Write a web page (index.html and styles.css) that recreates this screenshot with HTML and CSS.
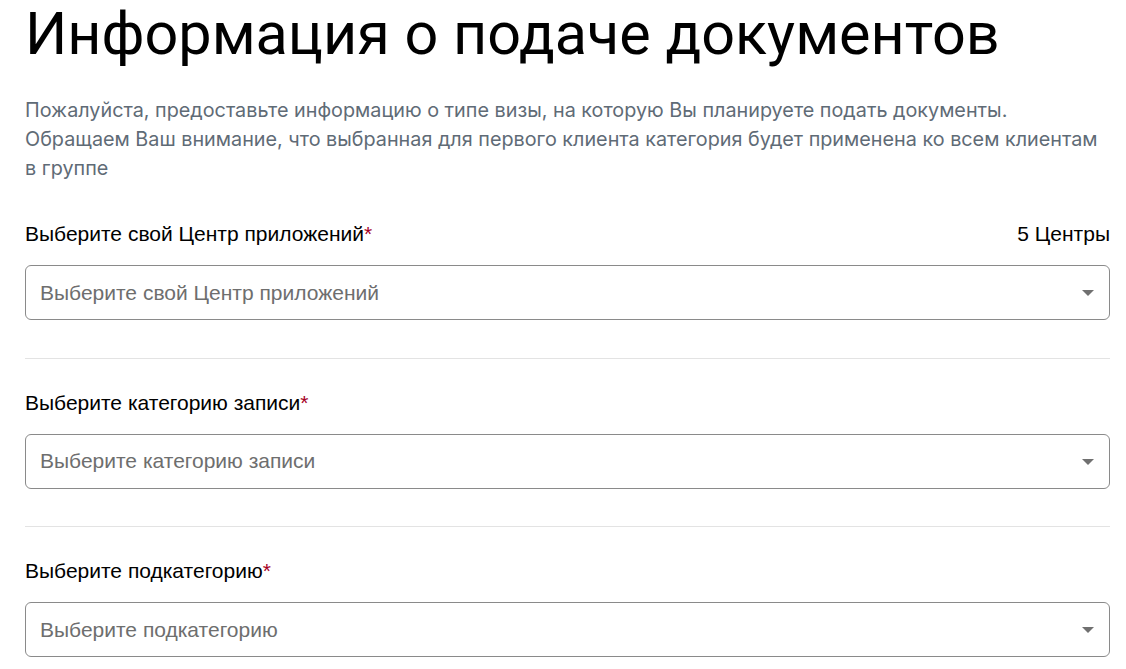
FILE: index.html
```html
<!DOCTYPE html>
<html lang="ru">
<head>
<meta charset="utf-8">
<link rel="stylesheet" href="styles.css">
</head>
<body>
<main class="page">
  <h1 class="title">Информация о подаче документов</h1>
  <p class="intro">Пожалуйста, предоставьте информацию о типе визы, на которую Вы планируете подать документы. Обращаем Ваш внимание, что выбранная для первого клиента категория будет применена ко всем клиентам в группе</p>

  <section class="field">
    <div class="label-row">
      <span class="label">Выберите свой Центр приложений<span class="req">*</span></span>
      <span class="count">5 Центры</span>
    </div>
    <div class="select">
      <span class="placeholder">Выберите свой Центр приложений</span>
      <svg class="caret" width="12" height="6" viewBox="0 0 12 6"><path d="M0 0H12L6 6Z" fill="#707070"/></svg>
    </div>
  </section>
  <hr class="divider">

  <section class="field">
    <div class="label-row">
      <span class="label">Выберите категорию записи<span class="req">*</span></span>
    </div>
    <div class="select">
      <span class="placeholder">Выберите категорию записи</span>
      <svg class="caret" width="12" height="6" viewBox="0 0 12 6"><path d="M0 0H12L6 6Z" fill="#707070"/></svg>
    </div>
  </section>
  <hr class="divider">

  <section class="field">
    <div class="label-row">
      <span class="label">Выберите подкатегорию<span class="req">*</span></span>
    </div>
    <div class="select">
      <span class="placeholder">Выберите подкатегорию</span>
      <svg class="caret" width="12" height="6" viewBox="0 0 12 6"><path d="M0 0H12L6 6Z" fill="#707070"/></svg>
    </div>
  </section>
</main>
</body>
</html>
```
FILE: styles.css
```css
html, body {
  margin: 0;
  padding: 0;
  background: #fff;
}
.page {
  width: 1085px;
  padding-left: 25px;
}
.title {
  margin: 0;
  font-family: Roboto, "Liberation Sans", sans-serif;
  font-weight: 400;
  font-size: 59.3px;
  line-height: 68px;
  color: #000;
}
.intro {
  margin: 28px 0 0;
  font-family: Inter, "Noto Sans", sans-serif;
  font-size: 19.8px;
  line-height: 29px;
  color: #5f6b76;
}
.field {
  margin-top: 39px;
}
.divider + .field {
  margin-top: 32px;
}
.label-row {
  display: flex;
  justify-content: space-between;
  align-items: center;
  height: 24px;
  font-family: "Liberation Sans", Arial, sans-serif;
  font-size: 21px;
  line-height: 24px;
  color: #000;
}
.req {
  color: #a6001f;
}
.select {
  margin-top: 19px;
  height: 53px;
  border: 1px solid #8a8a8a;
  border-radius: 6px;
  display: flex;
  align-items: center;
  justify-content: space-between;
  padding: 0 15px 0 14px;
}
.placeholder {
  font-family: "Liberation Sans", Arial, sans-serif;
  font-size: 21px;
  color: #6e6e6e;
}
.caret {
  display: block;
  margin-top: 1px;
}
.divider {
  margin: 37.5px 0 0;
  border: 0;
  height: 1px;
  background: #e3e3e3;
}
```
